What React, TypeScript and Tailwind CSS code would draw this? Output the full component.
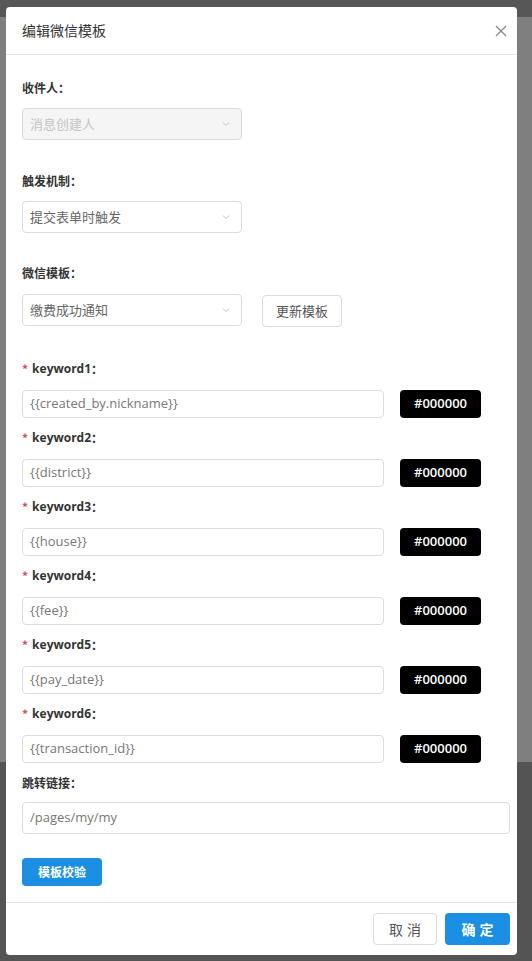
import React from 'react';

const font = { fontFamily: '"Noto Sans CJK SC", "Noto Sans", sans-serif' };
const latin = { fontFamily: '"Open Sans", "Noto Sans", "Noto Sans CJK SC", sans-serif' };

const keywords = [
  { label: 'keyword1', value: '{{created_by.nickname}}' },
  { label: 'keyword2', value: '{{district}}' },
  { label: 'keyword3', value: '{{house}}' },
  { label: 'keyword4', value: '{{fee}}' },
  { label: 'keyword5', value: '{{pay_date}}' },
  { label: 'keyword6', value: '{{transaction_id}}' },
];

const Chevron = () => (
  <svg width="10" height="10" viewBox="0 0 10 10" className="text-[#c0c0c0]">
    <path d="M2 3.5 L5 6.5 L8 3.5" fill="none" stroke="currentColor" strokeWidth="1" />
  </svg>
);

const Select = ({ text, disabled }: { text: string; disabled?: boolean }) => (
  <div
    className={`w-[220px] h-[32px] rounded border border-[#dcdcdc] flex items-center justify-between pl-[7px] pr-[10px] text-[13px] ${
      disabled ? 'bg-[#f5f5f5] text-[#c4c4c4]' : 'bg-white text-[#666]'
    }`}
  >
    <span>{text}</span>
    <Chevron />
  </div>
);

const Label = ({ children, className = '' }: { children: React.ReactNode; className?: string }) => (
  <div className={`h-[20px] leading-[20px] text-[12px] font-bold text-[#333] ${className}`}>{children}</div>
);

const App = () => {
  return (
    <div className="relative w-[532px] h-[961px] overflow-hidden bg-[#7d7d7d]" style={font}>
      {/* dimmed page behind */}
      <div className="h-[17px] bg-[#575757]" />
      <div className="h-[745px] bg-[#7f7f7f]" />
      <div className="h-[199px] bg-[#545454]" />

      <div className="absolute left-[6px] top-[7px] w-[511px] h-[948px] bg-white rounded-[4px] flex flex-col">
        {/* header */}
        <div className="h-[48px] shrink-0 border-b border-[#e8e8e8] flex items-center justify-between pl-[16px] pr-[10px]">
          <span className="text-[14px] text-[#333]">编辑微信模板</span>
          <svg width="12" height="12" viewBox="0 0 12 12" className="text-[#888]">
            <path d="M1 1 L11 11 M11 1 L1 11" stroke="currentColor" strokeWidth="1.3" />
          </svg>
        </div>

        {/* body */}
        <div className="flex-1 pl-[16px] pr-[7px] pt-[23px]">
          <Label>收件人：</Label>
          <div className="mt-[10px]">
            <Select text="消息创建人" disabled />
          </div>

          <Label className="mt-[31px]">触发机制：</Label>
          <div className="mt-[10px]">
            <Select text="提交表单时触发" />
          </div>

          <Label className="mt-[30px]">微信模板：</Label>
          <div className="mt-[10px] flex items-center gap-[20px]">
            <Select text="缴费成功通知" />
            <div className="w-[80px] h-[32px] mt-[2px] rounded border border-[#dcdcdc] flex items-center justify-center text-[13px] text-[#555]">
              更新模板
            </div>
          </div>

          <div className="mt-[32px] flex flex-col">
            {keywords.map((k) => (
              <div key={k.label} className="h-[69px] flex flex-col">
                <div className="h-[20px] flex items-center text-[12px] font-bold text-[#333]">
                  <span className="text-[#d0505a] mr-[4px] text-[12px]">*</span>
                  <span style={latin}>{k.label}</span>
                  <span>：</span>
                </div>
                <div className="mt-[11px] flex items-center gap-[16px]">
                  <div
                    className="w-[362px] h-[28px] rounded border border-[#dcdcdc] flex items-center pl-[7px] text-[13px] text-[#777]"
                    style={latin}
                  >
                    {k.value}
                  </div>
                  <div
                    className="w-[81px] h-[28px] rounded bg-black text-white text-[13px] font-semibold flex items-center justify-center"
                    style={latin}
                  >
                    #000000
                  </div>
                </div>
              </div>
            ))}
          </div>

          <Label>跳转链接：</Label>
          <div
            className="mt-[9px] w-[488px] h-[32px] rounded border border-[#dcdcdc] flex items-center pl-[7px] text-[13px] text-[#777]"
            style={latin}
          >
            /pages/my/my
          </div>

          <div className="mt-[24px] w-[80px] h-[28px] rounded bg-[#1b8fe3] text-white text-[12px] font-bold flex items-center justify-center">
            模板校验
          </div>
        </div>

        {/* footer */}
        <div className="h-[53px] shrink-0 border-t border-[#e8e8e8] flex items-center justify-end gap-[8px] pr-[7px]">
          <div className="w-[64px] h-[32px] rounded border border-[#dcdcdc] flex items-center justify-center text-[14px] text-[#555] tracking-[4px] pl-[4px]">
            取消
          </div>
          <div className="w-[65px] h-[32px] rounded bg-[#1b8fe3] flex items-center justify-center text-[14px] font-bold text-white tracking-[4px] pl-[4px]">
            确定
          </div>
        </div>
      </div>
    </div>
  );
};

export default App;
